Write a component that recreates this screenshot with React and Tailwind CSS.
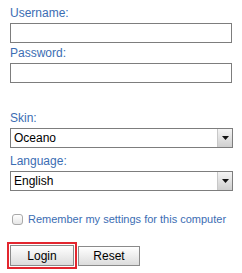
const Field = ({ label, children, className = "" }) => (
  <div className={`flex flex-col ${className}`}>
    <label className="text-[12px] leading-4 text-[#3b6db3]">{label}</label>
    <div className="mt-0.5">{children}</div>
  </div>
);

const TextBox = ({ type = "text" }) => (
  <input
    type={type}
    className="block w-[222px] h-5 border border-[#7d7d7d] bg-white outline-none"
  />
);

const FakeSelect = ({ value }) => (
  <div className="flex w-[223px] h-5 border border-[#7d7d7d] bg-white">
    <span className="flex-1 pl-[3px] text-[12px] leading-[18px] text-black">{value}</span>
    <span className="flex w-[15px] items-center justify-center border-l border-[#c8c8c8] bg-gradient-to-b from-[#f4f4f4] to-[#cfcfcf]">
      <svg width="7" height="4" viewBox="0 0 7 4">
        <path d="M0 0h7L3.5 4z" fill="#111" />
      </svg>
    </span>
  </div>
);

export default function App() {
  return (
    <div
      className="w-[242px] h-[273px] overflow-hidden bg-white pl-[10px] pt-[5px]"
      style={{ fontFamily: '"Liberation Sans", Arial, sans-serif' }}
    >
      <Field label="Username:">
        <TextBox />
      </Field>
      <Field label="Password:" className="mt-0.5">
        <TextBox type="password" />
      </Field>

      <Field label="Skin:" className="mt-[27px]">
        <FakeSelect value="Oceano" />
      </Field>
      <Field label="Language:" className="mt-[5px]">
        <FakeSelect value="English" />
      </Field>

      <div className="mt-[20px] flex items-center gap-[5px] pl-[2px]">
        <span className="block w-[11px] h-[11px] shrink-0 rounded-[3px] border border-[#a9a9a9] bg-gradient-to-b from-white to-[#e6e6e6]" />
        <span className="whitespace-nowrap text-[11px] leading-4 text-[#3b6db3]">
          Remember my settings for this computer
        </span>
      </div>

      <div className="mt-[15px] -ml-[3px] flex items-center">
        <span className="border-2 border-[#e3262f] p-px">
          <button className="block w-[64px] h-[21px] border border-[#8a8a8a] bg-gradient-to-b from-white to-[#dcdcdc] text-[12px] text-black leading-none">
            Login
          </button>
        </span>
        <button className="ml-px block w-[62px] h-5 border border-[#8a8a8a] bg-gradient-to-b from-white to-[#dcdcdc] text-[12px] text-black leading-none">
          Reset
        </button>
      </div>
    </div>
  );
}
